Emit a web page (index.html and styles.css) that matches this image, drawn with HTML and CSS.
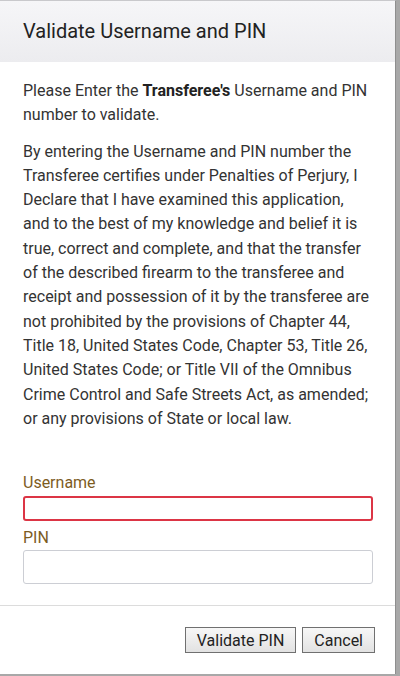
FILE: index.html
```html
<!DOCTYPE html>
<html>
<head>
<meta charset="utf-8">
<link rel="stylesheet" href="styles.css">
</head>
<body>
<div class="modal">
  <div class="modal-header">
    <h1 class="modal-title">Validate Username and PIN</h1>
  </div>
  <div class="modal-body">
    <p class="intro">Please Enter the <b>Transferee's</b> Username and PIN number to validate.</p>
    <p class="legal">By entering the Username and PIN number the Transferee certifies under Penalties of Perjury, I Declare that I have examined this application, and to the best of my knowledge and belief it is true, correct and complete, and that the transfer of the described firearm to the transferee and receipt and possession of it by the transferee are not prohibited by the provisions of Chapter 44, Title 18, United States Code, Chapter 53, Title 26, United States Code; or Title VII of the Omnibus Crime Control and Safe Streets Act, as amended; or any provisions of State or local law.</p>
    <div class="form">
      <label class="field-label" for="user">Username</label>
      <input class="field-input invalid" id="user" type="text">
      <label class="field-label pin-label" for="pin">PIN</label>
      <input class="field-input pin-input" id="pin" type="password">
    </div>
  </div>
  <div class="modal-footer">
    <button class="btn">Validate PIN</button>
    <button class="btn">Cancel</button>
  </div>
</div>
</body>
</html>
```
FILE: styles.css
```css
html, body {
  margin: 0;
  padding: 0;
}
body {
  width: 400px;
  height: 676px;
  background: #a8a8a8;
  font-family: Roboto, "Liberation Sans", sans-serif;
  overflow: hidden;
}
.modal {
  width: 395px;
  height: 673px;
  background: #fff;
  border-top: 1px solid #c9c9cc;
  border-right: 1px solid #8e8e8e;
  display: flex;
  flex-direction: column;
}
.modal-header {
  height: 61px;
  background: linear-gradient(#f6f6f8, #ececef);
  display: flex;
  align-items: center;
  padding: 0 23px;
  box-sizing: border-box;
}
.modal-title {
  margin: 0;
  font-size: 20px;
  font-weight: 400;
  color: #222;
  padding-bottom: 1px;
}
.modal-body {
  padding: 17px 22px 0 23px;
  color: #333;
  font-size: 16px;
  line-height: 24.3px;
  border-bottom: 1px solid #dcdcdc;
  height: 544px;
  box-sizing: border-box;
}
.modal-body p {
  margin: 0;
}
.intro b {
  font-weight: 700;
  color: #222;
}
.legal {
  margin-top: 12px !important;
}
.form {
  margin-top: 42px;
  display: flex;
  flex-direction: column;
}
.field-label {
  color: #7d5c1f;
  font-size: 16px;
  line-height: 20px;
  height: 23px;
}
.pin-label {
  margin-top: 7px;
  height: 22px;
}
.field-input {
  box-sizing: border-box;
  width: 350px;
  height: 25px;
  border: 1px solid #ccced4;
  border-radius: 3px;
  background: #fff;
  margin: 0;
  padding: 0 8px;
  outline: none;
}
.field-input.invalid {
  border: 2px solid #dc3545;
}
.pin-input {
  height: 34px;
}
.modal-footer {
  flex: 1;
  display: flex;
  justify-content: flex-end;
  align-items: flex-start;
  padding: 21px 20px 0 0;
  gap: 6px;
}
.btn {
  height: 26px;
  padding: 0 11px;
  font-family: Roboto, "Liberation Sans", sans-serif;
  font-size: 16px;
  color: #222;
  background: linear-gradient(#f7f7f7, #e2e2e2);
  border: 1px solid #707070;
  border-radius: 0;
}
```
